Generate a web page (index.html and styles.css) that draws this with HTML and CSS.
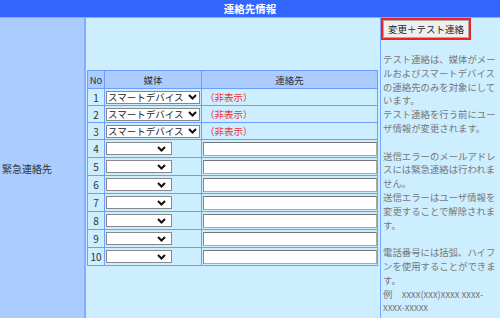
FILE: index.html
```html
<!DOCTYPE html>
<html>
<head>
	<title>連絡先情報</title>
	<link rel="stylesheet" href="styles.css">
</head>
<body>
	<div class="page">
		<div class="title">連絡先情報</div>
		<div class="row">
			<div class="label">緊急連絡先</div>
			<div class="main">
				<table class="list">
					<tr class="head">
						<th class="no">No</th>
						<th class="media">媒体</th>
						<th class="addr">連絡先</th>
					</tr>
					<tr class="set">
						<td class="no">1</td>
						<td><div class="sel wide"><span>スマートデバイス</span><svg width="9" height="6" viewBox="0 0 9 6"><path d="M1 1l3.5 3.5L8 1" fill="none" stroke="#111" stroke-width="2"/></svg></div></td>
						<td class="hide">（非表示）</td>
					</tr>
					<tr class="set">
						<td class="no">2</td>
						<td><div class="sel wide"><span>スマートデバイス</span><svg width="9" height="6" viewBox="0 0 9 6"><path d="M1 1l3.5 3.5L8 1" fill="none" stroke="#111" stroke-width="2"/></svg></div></td>
						<td class="hide">（非表示）</td>
					</tr>
					<tr class="set">
						<td class="no">3</td>
						<td><div class="sel wide"><span>スマートデバイス</span><svg width="9" height="6" viewBox="0 0 9 6"><path d="M1 1l3.5 3.5L8 1" fill="none" stroke="#111" stroke-width="2"/></svg></div></td>
						<td class="hide">（非表示）</td>
					</tr>
					<tr>
						<td class="no">4</td>
						<td><div class="sel"><span></span><svg width="9" height="6" viewBox="0 0 9 6"><path d="M1 1l3.5 3.5L8 1" fill="none" stroke="#111" stroke-width="2"/></svg></div></td>
						<td><div class="inp"></div></td>
					</tr>
					<tr>
						<td class="no">5</td>
						<td><div class="sel"><span></span><svg width="9" height="6" viewBox="0 0 9 6"><path d="M1 1l3.5 3.5L8 1" fill="none" stroke="#111" stroke-width="2"/></svg></div></td>
						<td><div class="inp"></div></td>
					</tr>
					<tr>
						<td class="no">6</td>
						<td><div class="sel"><span></span><svg width="9" height="6" viewBox="0 0 9 6"><path d="M1 1l3.5 3.5L8 1" fill="none" stroke="#111" stroke-width="2"/></svg></div></td>
						<td><div class="inp"></div></td>
					</tr>
					<tr>
						<td class="no">7</td>
						<td><div class="sel"><span></span><svg width="9" height="6" viewBox="0 0 9 6"><path d="M1 1l3.5 3.5L8 1" fill="none" stroke="#111" stroke-width="2"/></svg></div></td>
						<td><div class="inp"></div></td>
					</tr>
					<tr>
						<td class="no">8</td>
						<td><div class="sel"><span></span><svg width="9" height="6" viewBox="0 0 9 6"><path d="M1 1l3.5 3.5L8 1" fill="none" stroke="#111" stroke-width="2"/></svg></div></td>
						<td><div class="inp"></div></td>
					</tr>
					<tr>
						<td class="no">9</td>
						<td><div class="sel"><span></span><svg width="9" height="6" viewBox="0 0 9 6"><path d="M1 1l3.5 3.5L8 1" fill="none" stroke="#111" stroke-width="2"/></svg></div></td>
						<td><div class="inp"></div></td>
					</tr>
					<tr>
						<td class="no">10</td>
						<td><div class="sel"><span></span><svg width="9" height="6" viewBox="0 0 9 6"><path d="M1 1l3.5 3.5L8 1" fill="none" stroke="#111" stroke-width="2"/></svg></div></td>
						<td><div class="inp"></div></td>
					</tr>
				</table>
			</div>
			<div class="side">
				<div class="btnbox"><div class="btn">変更＋テスト連絡</div></div>
				<p class="note">テスト連絡は、媒体がメールおよびスマートデバイスの連絡先のみを対象にしています。<br>テスト連絡を行う前にユーザ情報が変更されます。<br><br>送信エラーのメールアドレスには緊急連絡は行われません。<br>送信エラーはユーザ情報を変更することで解除されます。<br><br>電話番号には括弧、ハイフンを使用することができます。<br>例　xxxx(xxx)xxxx xxxx-xxxx-xxxxx</p>
			</div>
		</div>
	</div>
</body>
</html>
```

FILE: styles.css
```css
*{
	padding: 0;
	margin: 0;
	box-sizing: border-box;
}
body{
	font-family: "Noto Sans CJK JP", "Liberation Sans", sans-serif;
	font-size: 10px;
	color: #333;
	background: #cceeff;
	overflow: hidden;
}
.page{
	width: 500px;
}
.title{
	height: 18px;
	line-height: 17px;
	background: #3366ff;
	border-bottom: 1px solid #88aaff;
	color: #fff;
	font-weight: bold;
	font-size: 10.5px;
	text-align: center;
}
.row{
	display: flex;
	height: 300px;
}
.label{
	width: 86px;
	background: #aaccff;
	border-right: 2px solid #88aaff;
	display: flex;
	align-items: center;
	padding-left: 2px;
	font-size: 10px;
}
.main{
	width: 294px;
	display: flex;
	align-items: center;
	padding-left: 1px;
	background: #cceeff;
}
.side{
	width: 120px;
	border-left: 1px solid #77aaff;
	background: #cceeff;
}
.list{
	border-collapse: collapse;
	width: 291px;
	table-layout: fixed;
}
.list th,
.list td{
	border: 1px solid #6f9cff;
	padding: 0;
	font-weight: normal;
	height: 18px;
	vertical-align: middle;
}
.list .head th{
	background: #aaccff;
	text-align: center;
	font-size: 9.5px;
}
.list th.no{
	width: 17px;
}
.list th.media{
	width: 97px;
}
.list td.no{
	text-align: center;
	font-size: 10px;
}
.list .set td{
	height: 17px;
}
.hide{
	color: #ee3333;
	padding-left: 3px !important;
	font-size: 9.5px;
}
.sel{
	margin-left: 1px;
	width: 66px;
	height: 13px;
	border: 1px solid #888;
	background: #fff;
	display: flex;
	align-items: center;
	justify-content: space-between;
	padding: 0 5px 0 1px;
	font-size: 9.5px;
	color: #222;
	line-height: 11px;
	overflow: hidden;
}
.sel.wide{
	width: 94px;
	padding-right: 2px;
}
.sel span{
	white-space: nowrap;
}
.sel svg{
	flex: none;
}
.inp{
	margin-left: 1px;
	width: 174px;
	height: 14px;
	background: #fff;
	border: 1px solid #aaa;
	border-top-color: #777;
	border-left-color: #888;
}
.btnbox{
	display: inline-block;
	border: 2px solid #ee2222;
	margin: 0 0 0 0;
}
.btn{
	width: 86px;
	height: 18px;
	line-height: 16px;
	border: 1px solid #aaa;
	background: #efefef;
	text-align: center;
	font-size: 9.5px;
	color: #222;
}
.note{
	margin-top: 13px;
	padding-left: 2px;
	padding-right: 1px;
	color: #777;
	font-size: 9.4px;
	line-height: 13.8px;
}
```
